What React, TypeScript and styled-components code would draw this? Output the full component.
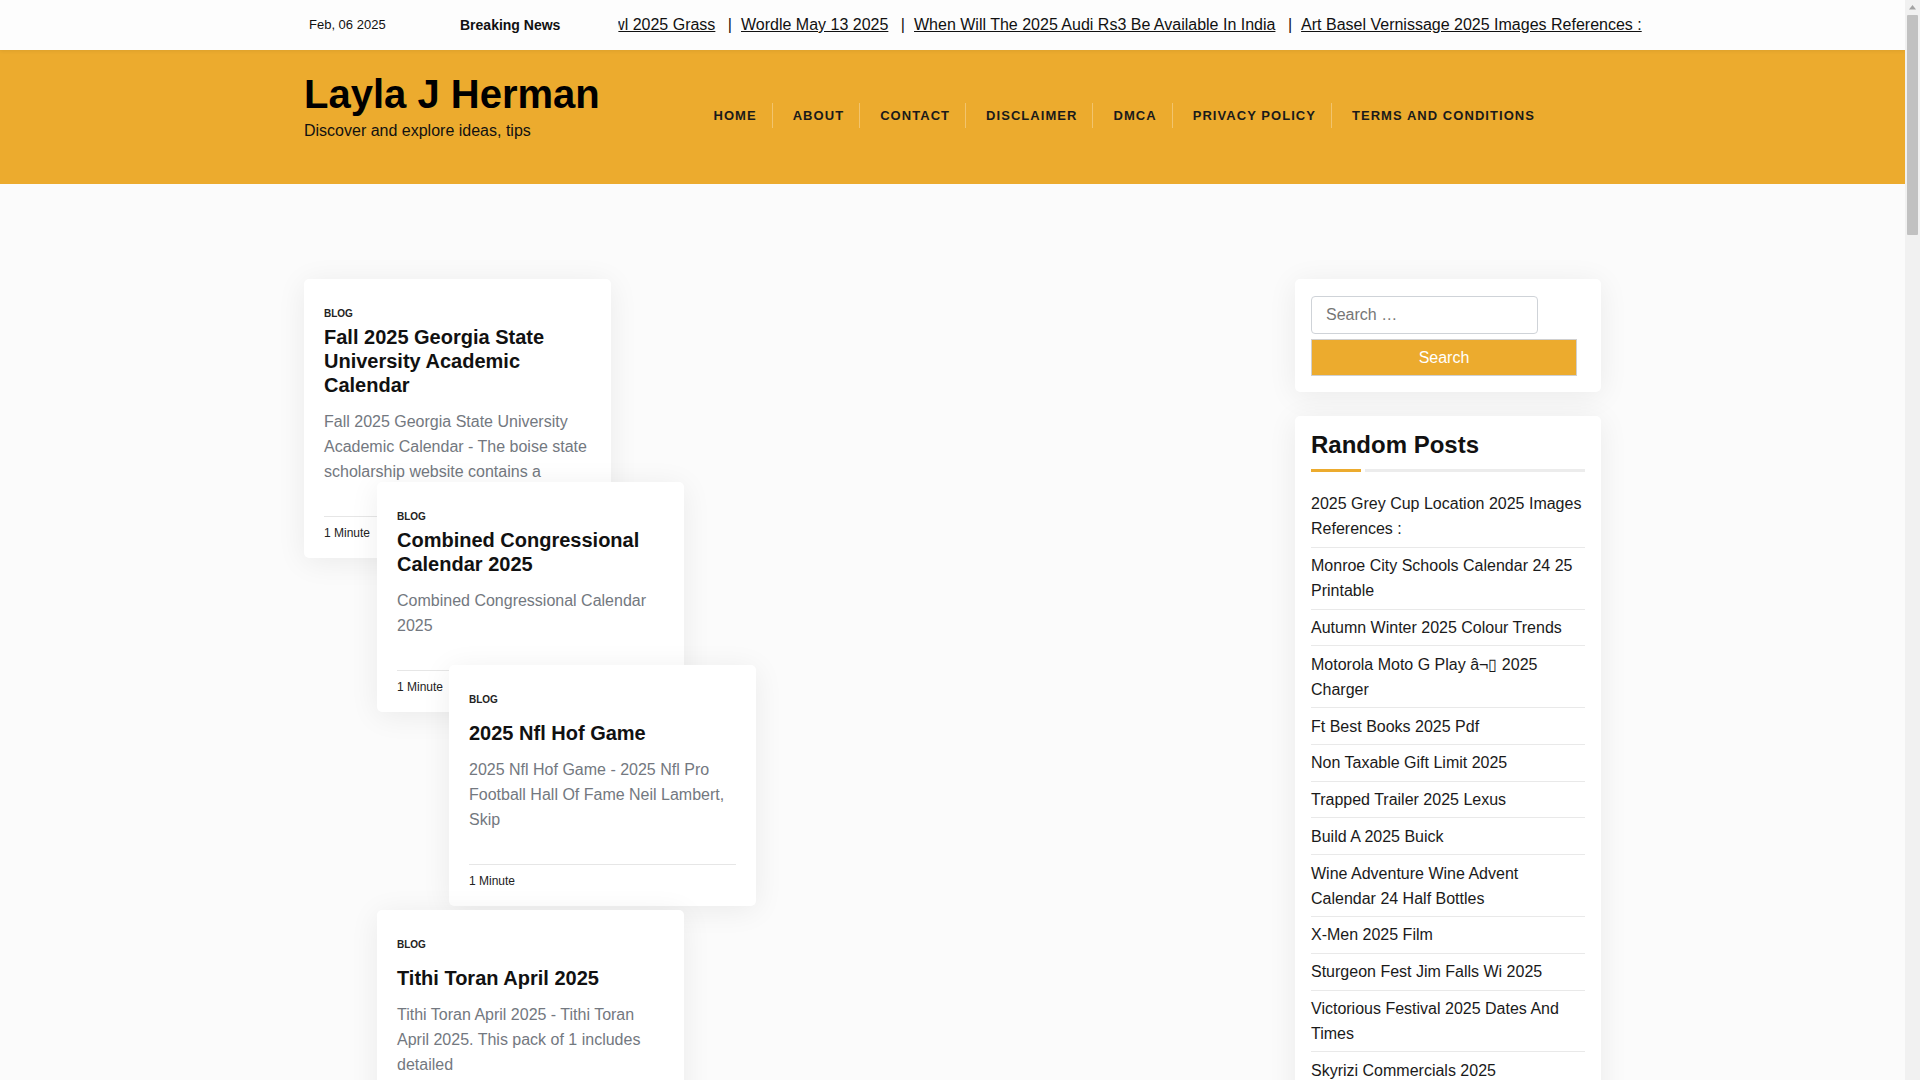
import React from 'react';
import styled, { createGlobalStyle } from 'styled-components';

const GlobalStyle = createGlobalStyle`
  body {
    margin: 0;
    padding-right: 15px;
    background: #fbfbfb;
    font-family: "Liberation Sans", Arial, sans-serif;
    color: #111;
  }
  * {
    box-sizing: border-box;
  }
`;

type Post = {
  title: string;
  excerpt: string;
  x: number;
  y: number;
  single?: boolean;
};

const posts: Post[] = [
  {
    title: 'Fall 2025 Georgia State University Academic Calendar',
    excerpt:
      'Fall 2025 Georgia State University Academic Calendar - The boise state scholarship website contains a',
    x: 0,
    y: 0,
  },
  {
    title: 'Combined Congressional Calendar 2025',
    excerpt: 'Combined Congressional Calendar 2025',
    x: 73,
    y: 203,
  },
  {
    title: '2025 Nfl Hof Game',
    excerpt: '2025 Nfl Hof Game - 2025 Nfl Pro Football Hall Of Fame Neil Lambert, Skip',
    x: 145,
    y: 386,
    single: true,
  },
  {
    title: 'Tithi Toran April 2025',
    excerpt: 'Tithi Toran April 2025 - Tithi Toran April 2025. This pack of 1 includes detailed',
    x: 73,
    y: 631,
    single: true,
  },
];

const tickerItems = [
  'Super Bowl 2025 Grass',
  'Wordle May 13 2025',
  'When Will The 2025 Audi Rs3 Be Available In India',
  'Art Basel Vernissage 2025 Images References :',
];

const navItems = ['Home', 'About', 'Contact', 'Disclaimer', 'DMCA', 'Privacy Policy', 'Terms and Conditions'];

const randomPosts = [
  '2025 Grey Cup Location 2025 Images References :',
  'Monroe City Schools Calendar 24 25 Printable',
  'Autumn Winter 2025 Colour Trends',
  'Motorola Moto G Play \u00e2\u00ac\u25af 2025 Charger',
  'Ft Best Books 2025 Pdf',
  'Non Taxable Gift Limit 2025',
  'Trapped Trailer 2025 Lexus',
  'Build A 2025 Buick',
  'Wine Adventure Wine Advent Calendar 24 Half Bottles',
  'X-Men 2025 Film',
  'Sturgeon Fest Jim Falls Wi 2025',
  'Victorious Festival 2025 Dates And Times',
  'Skyrizi Commercials 2025',
  'Kentucky Derby 2025 Post Time',
  'Easter Sunday 2025 Date',
];

const Container = styled.div`
  width: 1297px;
  margin: 0 auto;
`;

const TopBar = styled.div`
  background: #fdfdfd;
  box-shadow: 0 1px 4px rgba(0, 0, 0, 0.07);
  position: relative;
  z-index: 2;
`;

const TopInner = styled(Container)`
  height: 50px;
  display: flex;
  align-items: center;
  padding-left: 5px;
`;

const DateText = styled.span`
  flex: none;
  width: 151px;
  font-size: 13px;
  white-space: nowrap;
  color: #111;
  margin-bottom: 2px;
`;

const BreakingLabel = styled.span`
  flex: none;
  font-size: 14px;
  font-weight: 700;
  color: #111;
  white-space: nowrap;
`;

const Ticker = styled.div`
  flex: 1;
  min-width: 0;
  margin-left: 58px;
  clip-path: inset(-10px -400px -10px 0);
`;

const TickerTrack = styled.div`
  display: flex;
  white-space: nowrap;
  transform: translateX(-72px);
`;

const TickerLink = styled.a`
  flex: none;
  font-size: 16px;
  color: #111;
  text-decoration: underline;
`;

const TickerSep = styled.span`
  flex: none;
  font-size: 16px;
  color: #111;
  margin: 0 9px 0 12.5px;
`;

const Header = styled.header`
  background: #ecab2e;
`;

const HeaderInner = styled(Container)`
  height: 134px;
  display: flex;
`;

const Brand = styled.div`
  padding-top: 20px;
`;

const SiteTitle = styled.h1`
  margin: 0;
  font-size: 40px;
  line-height: 48px;
  font-weight: 700;
  color: #000;
`;

const Tagline = styled.p`
  margin: 1px 0 0;
  font-size: 16px;
  line-height: 24px;
  color: #111;
`;

const Nav = styled.ul`
  list-style: none;
  margin: 0 51px 4px auto;
  padding: 0;
  display: flex;
  align-self: center;
`;

const NavItem = styled.li<{ $first?: boolean }>`
  height: 25px;
  display: flex;
  align-items: center;
  padding: 0 15px 0 20px;
  border-left: ${(p) => (p.$first ? 'none' : '1px solid rgba(255, 255, 255, 0.3)')};
  font-size: 13px;
  font-weight: 700;
  letter-spacing: 1.05px;
  text-transform: uppercase;
  color: #1a1a1a;
  white-space: nowrap;
`;

const Main = styled(Container)`
  display: flex;
  justify-content: space-between;
  padding-top: 95px;
`;

const Masonry = styled.div`
  position: relative;
  flex: 1;
  height: 1150px;
`;

const Card = styled.article`
  position: absolute;
  width: 307px;
  background: #fff;
  border-radius: 5px;
  box-shadow: 0 4px 30px rgba(0, 0, 0, 0.07);
  padding: 27px 20px 16px;
`;

const Category = styled.div`
  font-size: 10px;
  line-height: 16px;
  font-weight: 700;
  text-transform: uppercase;
  color: #222;
`;

const CardTitle = styled.h2<{ $single?: boolean }>`
  margin: ${(p) => (p.$single ? '13px' : '2.5px')} 0 0;
  font-size: 20px;
  line-height: 24px;
  font-weight: 700;
  color: #111;
`;

const Excerpt = styled.p`
  margin: 12px 0 32px;
  font-size: 16px;
  line-height: 25px;
  color: #737880;
`;

const CardFooter = styled.div`
  border-top: 1px solid #e6e6e6;
  padding-top: 7px;
  font-size: 12px;
  line-height: 18px;
  color: #222;
`;

const Sidebar = styled.aside`
  width: 306px;
  display: flex;
  flex-direction: column;
  gap: 24px;
`;

const Widget = styled.section`
  background: #fff;
  border-radius: 5px;
  box-shadow: 0 4px 30px rgba(0, 0, 0, 0.07);
  padding: 16px;
`;

const SearchForm = styled.form`
  display: flex;
  flex-direction: column;
  gap: 5px;
  padding-top: 1px;
`;

const SearchInput = styled.input`
  width: 227px;
  height: 38px;
  border: 1px solid #cfd3d8;
  border-radius: 4px;
  padding: 0 14px;
  font-family: inherit;
  font-size: 16px;
  color: #333;
  background: #fff;
  &::placeholder {
    color: #767676;
  }
`;

const SearchButton = styled.button`
  width: 266px;
  height: 37px;
  border: 1px solid #d0d0d0;
  background: #ecab2e;
  color: #fff;
  font-family: inherit;
  font-size: 16px;
`;

const WidgetTitle = styled.h3`
  margin: 0;
  font-size: 24px;
  line-height: 26px;
  font-weight: 700;
  color: #111;
`;

const TitleBar = styled.div`
  display: flex;
  gap: 4px;
  height: 3px;
  margin-top: 11px;
`;

const TitleBarPart = styled.span<{ $accent?: boolean }>`
  display: block;
  height: 3px;
  width: ${(p) => (p.$accent ? '50px' : 'auto')};
  flex: ${(p) => (p.$accent ? 'none' : '1')};
  background: ${(p) => (p.$accent ? '#ecab2e' : '#ececec')};
`;

const PostList = styled.ul`
  list-style: none;
  margin: 14px 0 0;
  padding: 0;
`;

const PostItem = styled.li`
  padding: 5.4px 0;
  border-bottom: 1px solid #e9e9e9;
  font-size: 16px;
  line-height: 25px;
  color: #1a1a1a;
`;

const Scrollbar = styled.div`
  position: fixed;
  top: 0;
  right: 0;
  bottom: 0;
  width: 15px;
  background: #f1f1f1;
  z-index: 10;
`;

const ScrollArrow = styled.svg`
  display: block;
  width: 15px;
  height: 15px;
`;

const ScrollThumb = styled.div`
  margin: 0 2px;
  height: 220px;
  border-radius: 1px;
  background: #c1c1c1;
`;

export default function App() {
  return (
    <>
      <GlobalStyle />
      <TopBar>
        <TopInner>
          <DateText>Feb, 06 2025</DateText>
          <BreakingLabel>Breaking News</BreakingLabel>
          <Ticker>
            <TickerTrack>
              {tickerItems.map((item, i) => (
                <React.Fragment key={item}>
                  {i > 0 && <TickerSep>|</TickerSep>}
                  <TickerLink href="#">{item}</TickerLink>
                </React.Fragment>
              ))}
            </TickerTrack>
          </Ticker>
        </TopInner>
      </TopBar>

      <Header>
        <HeaderInner>
          <Brand>
            <SiteTitle>Layla J Herman</SiteTitle>
            <Tagline>Discover and explore ideas, tips</Tagline>
          </Brand>
          <Nav>
            {navItems.map((item, i) => (
              <NavItem key={item} $first={i === 0}>
                {item}
              </NavItem>
            ))}
          </Nav>
        </HeaderInner>
      </Header>

      <Main>
        <Masonry>
          {posts.map((post) => (
            <Card key={post.title} style={{ left: post.x, top: post.y }}>
              <Category>Blog</Category>
              <CardTitle $single={post.single}>{post.title}</CardTitle>
              <Excerpt>{post.excerpt}</Excerpt>
              <CardFooter>1 Minute</CardFooter>
            </Card>
          ))}
        </Masonry>

        <Sidebar>
          <Widget>
            <SearchForm onSubmit={(e) => e.preventDefault()}>
              <SearchInput type="search" placeholder="Search …" />
              <SearchButton type="submit">Search</SearchButton>
            </SearchForm>
          </Widget>
          <Widget>
            <WidgetTitle>Random Posts</WidgetTitle>
            <TitleBar>
              <TitleBarPart $accent />
              <TitleBarPart />
            </TitleBar>
            <PostList>
              {randomPosts.map((item) => (
                <PostItem key={item}>{item}</PostItem>
              ))}
            </PostList>
          </Widget>
        </Sidebar>
      </Main>

      <Scrollbar>
        <ScrollArrow viewBox="0 0 15 15">
          <path d="M7.5 5 L11 9.5 H4 Z" fill="#a3a3a3" />
        </ScrollArrow>
        <ScrollThumb />
      </Scrollbar>
    </>
  );
}
